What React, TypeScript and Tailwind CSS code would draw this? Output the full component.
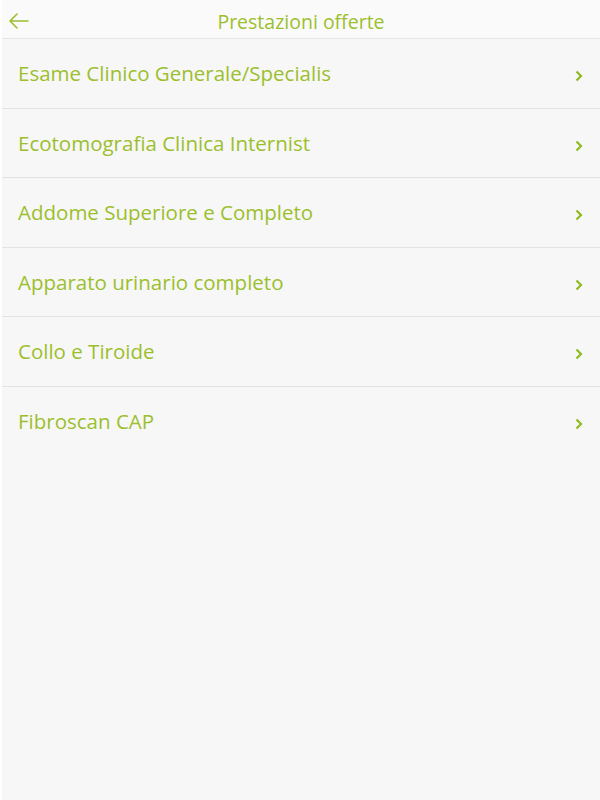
const items = [
  "Esame Clinico Generale/Specialis",
  "Ecotomografia Clinica Internist",
  "Addome Superiore e Completo",
  "Apparato urinario completo",
  "Collo e Tiroide",
  "Fibroscan CAP",
];

function ArrowLeft() {
  return (
    <svg width="22" height="16" viewBox="0 0 22 16" fill="none" stroke="#9dbf2e" strokeWidth="1.6" strokeLinecap="round" strokeLinejoin="round">
      <path d="M20 8H2M9 1L2 8l7 7" />
    </svg>
  );
}

function Chevron() {
  return (
    <svg width="8" height="12" viewBox="0 0 8 12" fill="none" stroke="#8fba1f" strokeWidth="2.2" strokeLinejoin="miter">
      <path d="M1.5 1.5L6 6l-4.5 4.5" />
    </svg>
  );
}

export default function App() {
  return (
    <div className="h-[800px] w-[600px] bg-white pl-[2px] font-['Open_Sans',sans-serif] text-[#9cbf2d]">
      <div className="flex h-full flex-col bg-[#f7f7f7]">
        <header className="relative flex h-[39px] items-center justify-center border-b border-[#e6e6e6] bg-[#fafafa] pt-[5px]">
          <button className="absolute left-[6px] top-[13px]">
            <ArrowLeft />
          </button>
          <h1 className="text-[19.5px] leading-none">Prestazioni offerte</h1>
        </header>
        <ul>
          {items.map((item) => (
            <li
              key={item}
              className="flex h-[69.5px] items-center justify-between border-b border-[#e3e3e3] pl-[16px] pr-[17px] last:border-b-0"
            >
              <span className="text-[20.5px] leading-none">{item}</span>
              <span className="mt-[6px]">
                <Chevron />
              </span>
            </li>
          ))}
        </ul>
      </div>
    </div>
  );
}
